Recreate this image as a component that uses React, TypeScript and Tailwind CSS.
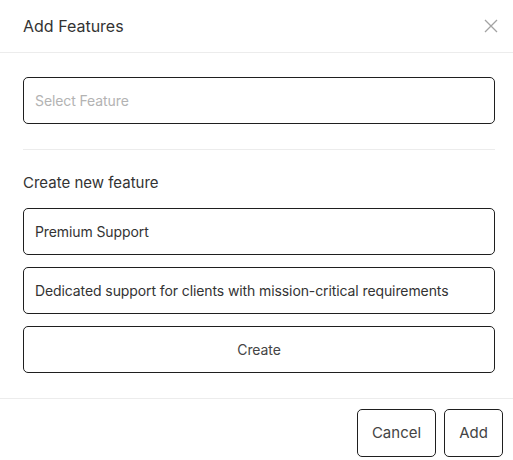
import React from "react"

function CloseIcon() {
  return (
    <svg width="14" height="14" viewBox="0 0 14 14" fill="none" stroke="#a3a3a3" strokeWidth="1.3">
      <path d="M1 1 L13 13 M13 1 L1 13" />
    </svg>
  )
}

const boxClass =
  "flex h-[47px] w-full items-center rounded-[5px] border border-[#1f1f1f] bg-white px-[11px] text-[14px] tracking-[-0.1px] text-[#333333]"

export default function App() {
  return (
    <div
      className="flex h-[460px] w-[513px] flex-col bg-white"
      style={{ fontFamily: "Inter, 'Noto Sans', sans-serif" }}
    >
      {/* header */}
      <div className="flex h-[53px] items-center justify-between border-b border-[#ececec] pl-[23px] pr-[10px]">
        <span className="text-[16px] text-[#333333]">Add Features</span>
        <button className="flex h-6 w-6 items-center justify-center">
          <CloseIcon />
        </button>
      </div>

      {/* body */}
      <div className="flex flex-col pb-[25px] pl-[23px] pr-[18px] pt-[24px]">
        <div className={boxClass}>
          <span className="text-[#b3b3b3]">Select Feature</span>
        </div>
        <div className="mt-[25px] border-t border-[#ececec]" />
        <div className="flex h-[58px] items-center pt-[8px] text-[15px] text-[#333333]">
          Create new feature
        </div>
        <div className="flex flex-col gap-[12px]">
          <div className={boxClass}>Premium Support</div>
          <div className={boxClass}>Dedicated support for clients with mission-critical requirements</div>
          <button className={boxClass + " justify-center text-[#444444]"}>Create</button>
        </div>
      </div>

      {/* footer */}
      <div className="flex justify-end gap-[8px] border-t border-[#ececec] pr-[10px] pt-[10px]">
        <button className="h-[48px] w-[79px] rounded-[5px] border border-[#1f1f1f] text-[15px] text-[#444444]">
          Cancel
        </button>
        <button className="h-[48px] w-[59px] rounded-[5px] border border-[#1f1f1f] text-[15px] text-[#444444]">
          Add
        </button>
      </div>
    </div>
  )
}
